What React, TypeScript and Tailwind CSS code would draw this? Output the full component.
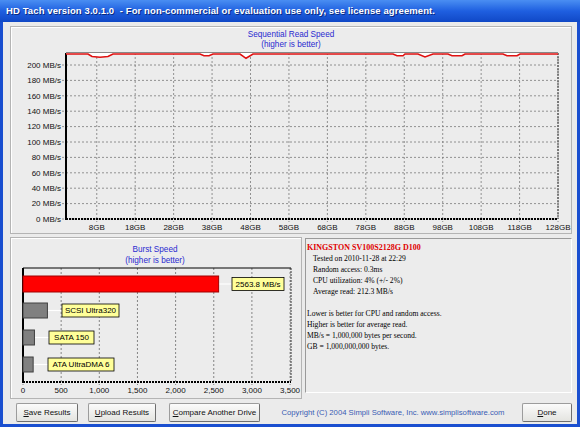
import React from "react";

const yLabels = [200, 180, 160, 140, 120, 100, 80, 60, 40, 20, 0];
const yOf = (v: number) => 219 - v * 0.77;
const xGB = (gb: number) => 66 + gb * 3.844;
const gbTicks = [8, 18, 28, 38, 48, 58, 68, 78, 88, 98, 108, 118, 128];

// red sequential read trace (page coords)
const trace: [number, number][] = [
  [66, 54], [88, 54], [92, 56.5], [100, 57.3], [108, 56.5], [113, 54],
  [200, 54], [204, 55.8], [209, 55.8], [213, 54], [240, 54], [246, 58.3],
  [253, 54], [393, 54], [397, 55.8], [403, 55.8], [405, 54], [418, 54],
  [425, 57], [433, 54], [448, 54], [452, 55.8], [462, 55.8], [465, 54],
  [503, 54], [507, 55.8], [517, 55.8], [520, 54], [558, 54],
];

const xBurst = (v: number) => 23 + v * 0.0763;
const burstTicks = [0, 500, 1000, 1500, 2000, 2500, 3000, 3500];

const bars = [
  { v: 2563.8, y: 276, h: 16, fill: "#ff0000", stroke: "#a00000", label: "2563.8 MB/s", lx: 232, lw: 52 },
  { v: 320, y: 303, h: 15, fill: "#808080", stroke: "#404040", label: "SCSI Ultra320", lx: 62, lw: 57 },
  { v: 150, y: 330, h: 15, fill: "#808080", stroke: "#404040", label: "SATA 150", lx: 49, lw: 45 },
  { v: 133, y: 357, h: 15, fill: "#808080", stroke: "#404040", label: "ATA UltraDMA 6", lx: 48, lw: 66 },
];

function SeqChart() {
  const pts = trace.map(([x, y]) => `${x},${y}`).join(" ");
  return (
    <svg width={560} height={206} viewBox="11 27 560 206" style={{ fontFamily: '"Liberation Sans", Arial, sans-serif' }}>
      <text x={291} y={37} fontSize={8.2} fill="#2a2ad0" textAnchor="middle">Sequential Read Speed</text>
      <text x={291} y={47} fontSize={8.2} fill="#2a2ad0" textAnchor="middle">(higher is better)</text>

      {yLabels.map((v) => (
        <g key={v}>
          <line x1={62} x2={558} y1={yOf(v)} y2={yOf(v)} stroke="#7a7a7a" strokeWidth={0.8} strokeDasharray="2 2" />
          <text x={61} y={yOf(v) + 2.8} fontSize={8} fill="#111" textAnchor="end">{v} MB/s</text>
        </g>
      ))}
      {gbTicks.map((g) => (
        <g key={g}>
          <line x1={xGB(g)} x2={xGB(g)} y1={53} y2={222} stroke="#7a7a7a" strokeWidth={0.8} strokeDasharray="2 2" />
          <text x={xGB(g)} y={230} fontSize={8} fill="#111" textAnchor="middle">{g}GB</text>
        </g>
      ))}

      <line x1={66} x2={558} y1={53} y2={53} stroke="#222" strokeWidth={1} />
      <line x1={558} x2={558} y1={53} y2={219} stroke="#333" strokeWidth={1} strokeDasharray="2 1" />
      <line x1={66} x2={558} y1={219} y2={219} stroke="#000" strokeWidth={2} strokeDasharray="2 1" />
      <line x1={66} x2={66} y1={53} y2={220} stroke="#000" strokeWidth={2} />

      <polygon points={`66,53 ${pts} 558,53`} fill="#ffffff" />
      <polyline points={pts} fill="none" stroke="#e01010" strokeWidth={1.6} />
    </svg>
  );
}

function BurstChart() {
  return (
    <svg width={290} height={160} viewBox="11 238 290 160" overflow="visible" style={{ fontFamily: '"Liberation Sans", Arial, sans-serif' }}>
      <text x={155} y={252} fontSize={8.2} fill="#2a2ad0" textAnchor="middle">Burst Speed</text>
      <text x={155} y={263} fontSize={8.2} fill="#2a2ad0" textAnchor="middle">(higher is better)</text>

      {burstTicks.map((t) => (
        <g key={t}>
          <line x1={xBurst(t)} x2={xBurst(t)} y1={268} y2={385} stroke="#6a6a6a" strokeWidth={0.8} strokeDasharray="2 2" />
          <text x={xBurst(t)} y={393} fontSize={8} fill="#111" textAnchor="middle">
            {t.toLocaleString("en-US")}
          </text>
        </g>
      ))}

      <line x1={23} x2={291} y1={268} y2={268} stroke="#000" strokeWidth={1.2} />
      <line x1={291} x2={291} y1={268} y2={382} stroke="#333" strokeWidth={1} strokeDasharray="2 1" />
      <line x1={23} x2={291} y1={382} y2={382} stroke="#000" strokeWidth={2} strokeDasharray="2 1" />
      <line x1={23} x2={23} y1={268} y2={383} stroke="#000" strokeWidth={2} />

      {bars.map((b) => {
        const end = xBurst(b.v);
        const cy = b.y + b.h / 2;
        return (
          <g key={b.label}>
            <line x1={end} x2={b.lx} y1={cy} y2={cy} stroke="#ffffff" strokeWidth={1.2} />
            <rect x={23} y={b.y} width={end - 23} height={b.h} fill={b.fill} stroke={b.stroke} strokeWidth={1} />
            <rect x={b.lx} y={cy - 6.5} width={b.lw} height={13} fill="#ffff99" stroke="#000" strokeWidth={0.8} />
            <text x={b.lx + b.lw / 2} y={cy + 2.8} fontSize={8} fill="#000" textAnchor="middle">{b.label}</text>
          </g>
        );
      })}
    </svg>
  );
}

function XpButton({ label, rest, w }: { label: string; rest: string; w: string }) {
  return (
    <button
      className={`${w} h-[19px] border border-[#9c9c9c] border-r-[#6e6e6e] border-b-[#6e6e6e] rounded-[2px] bg-gradient-to-b from-[#fbfbfb] to-[#e4e4e0] text-[8px] text-[#111] leading-none`}
    >
      <span className="underline">{label}</span>
      {rest}
    </button>
  );
}

export default function App() {
  return (
    <div className="w-[580px] h-[427px] flex flex-col bg-[#1a4fd0] overflow-hidden font-['Liberation_Sans',Arial,sans-serif]">
      {/* title bar */}
      <div className="h-[22px] shrink-0 flex items-center pl-[6px] bg-gradient-to-b from-[#4a8ef2] via-[#1f5fe0] to-[#1048c6] text-white font-bold text-[9.5px] tracking-[0.1px] [text-shadow:1px_1px_0_#0a2a80]">
        HD Tach version 3.0.1.0&nbsp; - For non-commercial or evaluation use only, see license agreement.
      </div>

      <div className="flex-1 mx-[3px] mb-[3px] bg-[#ebebeb] flex flex-col pl-[7px] pr-[5px] pt-[4px]">
        {/* sequential read panel */}
        <div className="h-[208px] border border-[#b4b4b4] shadow-[inset_1px_1px_0_#ffffff] bg-[#ececec]">
          <SeqChart />
        </div>

        <div className="flex mt-[3px] h-[162px]">
          {/* burst speed panel */}
          <div className="w-[292px] h-[162px] border border-[#b4b4b4] shadow-[inset_1px_1px_0_#ffffff] bg-[#ececec]">
            <BurstChart />
          </div>

          {/* drive info */}
          <div className="flex-1 ml-[3px] mt-[1px] h-[155px] border border-[#9a9a9a] border-r-white border-b-white bg-[#ececec] pl-[1px] pt-[3px] text-[7.6px] leading-[11px] text-black font-['Liberation_Serif','Times_New_Roman',serif]">
            <div className="text-[#e00000] font-bold text-[8px]">KINGSTON SV100S2128G D100</div>
            <div className="pl-[6px]">
              <div>Tested on 2010-11-28 at 22:29</div>
              <div>Random access: 0.3ms</div>
              <div>CPU utilization: 4% (+/- 2%)</div>
              <div>Average read: 212.3 MB/s</div>
            </div>
            <div className="mt-[11px]">
              <div>Lower is better for CPU and random access.</div>
              <div>Higher is better for average read.</div>
              <div>MB/s = 1,000,000 bytes per second.</div>
              <div>GB = 1,000,000,000 bytes.</div>
            </div>
          </div>
        </div>

        {/* buttons */}
        <div className="flex items-center mt-[4px] pl-[6px]">
          <XpButton label="S" rest="ave Results" w="w-[62px]" />
          <div className="w-[10px]" />
          <XpButton label="U" rest="pload Results" w="w-[68px]" />
          <div className="w-[13px]" />
          <XpButton label="C" rest="ompare Another Drive" w="w-[91px]" />
          <div className="flex-1 text-center text-[7.7px] text-[#3a5cb4] pl-[4px]">
            Copyright (C) 2004 Simpli Software, Inc. www.simplisoftware.com
          </div>
          <XpButton label="D" rest="one" w="w-[50px]" />
        </div>
      </div>
    </div>
  );
}
